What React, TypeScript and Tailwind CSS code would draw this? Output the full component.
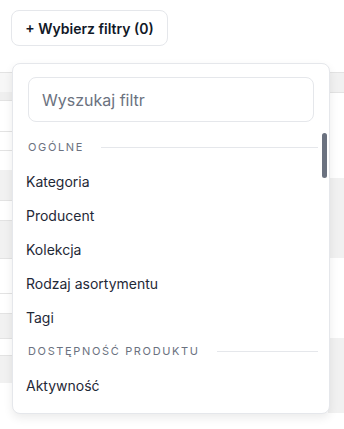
import React from "react";

const leftRows: { h: number; bg: string; border?: boolean }[] = [
  { h: 12, bg: "bg-white" },
  { h: 20, bg: "bg-[#f7f7f7]", border: true },
  { h: 8, bg: "bg-[#efefef]" },
  { h: 31, bg: "bg-white", border: true },
  { h: 19, bg: "bg-white", border: true },
  { h: 20, bg: "bg-white", border: true },
  { h: 30, bg: "bg-[#f1f1f1]" },
  { h: 20, bg: "bg-white", border: true },
  { h: 38, bg: "bg-[#f1f1f1]", border: true },
  { h: 35, bg: "bg-white", border: true },
  { h: 20, bg: "bg-white", border: true },
  { h: 25, bg: "bg-[#f1f1f1]", border: true },
  { h: 17, bg: "bg-white", border: true },
  { h: 28, bg: "bg-[#f1f1f1]", border: true },
];

const rightRows: { h: number; bg: string; border?: boolean }[] = [
  { h: 12, bg: "bg-white" },
  { h: 20, bg: "bg-[#f1f1f1]", border: true },
  { h: 86, bg: "bg-white", border: true },
  { h: 80, bg: "bg-[#f1f1f1]" },
  { h: 80, bg: "bg-white" },
  { h: 75, bg: "bg-[#f1f1f1]" },
];

const items = ["Kategoria", "Producent", "Kolekcja", "Rodzaj asortymentu", "Tagi"];

export default function App() {
  return (
    <div
      className="relative w-[344px] h-[429px] overflow-hidden bg-white"
      style={{ fontFamily: "Inter, 'Noto Sans', sans-serif" }}
    >
      <div className="h-[60px] px-[11px] pt-[10px]">
        <button className="h-[36px] w-[157px] rounded-lg border border-[#e5e7eb] bg-white text-[14px] font-semibold text-[#111827] flex items-center justify-center">
          + Wybierz filtry (0)
        </button>
      </div>
      <div className="flex justify-between">
        <div className="w-[14px] flex flex-col">
          {leftRows.map((r, i) => (
            <div
              key={i}
              className={`${r.bg} ${r.border ? "border-t border-[#e3e3e3]" : ""}`}
              style={{ height: r.h }}
            />
          ))}
        </div>
        <div className="w-[16px] flex flex-col">
          {rightRows.map((r, i) => (
            <div
              key={i}
              className={`${r.bg} ${r.border ? "border-t border-[#e3e3e3]" : ""}`}
              style={{ height: r.h }}
            />
          ))}
        </div>
      </div>
      <div className="absolute left-[12px] top-[63px] w-[318px] h-[351px] rounded-lg border border-[#e5e7eb] bg-white shadow-[0_4px_10px_rgba(0,0,0,0.08)]">
        <div className="px-[15px] pt-[13px]">
          <div className="h-[45px] w-[286px] rounded-lg border border-[#e5e7eb] flex items-center px-[13px] text-[16px] text-[#6b7280]">
            Wyszukaj filtr
          </div>
        </div>
        <div className="mt-[8px] pr-[11px]">
          <div className="h-[34px] flex items-center pl-[15px] gap-[17px]">
            <span className="text-[11px] tracking-[0.15em] text-[#6b7280]">OGÓLNE</span>
            <div className="flex-1 h-px bg-[#e5e7eb]" />
          </div>
          {items.map((t) => (
            <div key={t} className="h-[34px] flex items-center pl-[13px] text-[14px] text-[#1f2937]">
              {t}
            </div>
          ))}
          <div className="h-[34px] flex items-center pl-[15px] gap-[17px]">
            <span className="text-[11px] tracking-[0.15em] text-[#6b7280]">DOSTĘPNOŚĆ PRODUKTU</span>
            <div className="flex-1 h-px bg-[#e5e7eb]" />
          </div>
          <div className="h-[34px] flex items-center pl-[13px] text-[14px] text-[#1f2937]">
            Aktywność
          </div>
        </div>
        <div className="absolute left-[309px] top-[69px] w-[5px] h-[45px] rounded-full bg-[#6b7280]" />
      </div>
    </div>
  );
}
